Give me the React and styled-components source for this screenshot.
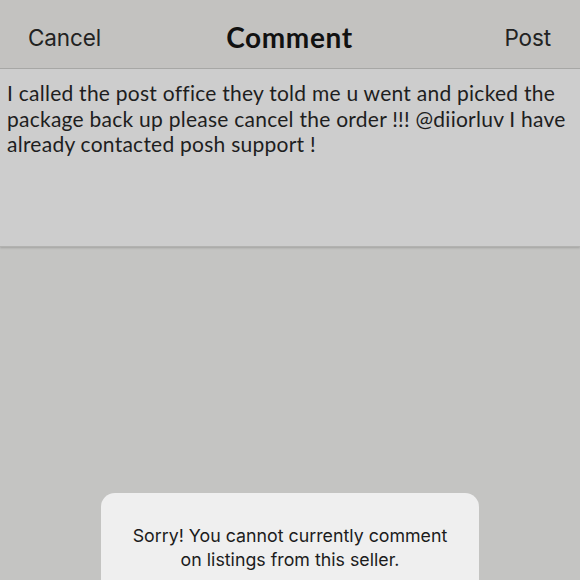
import React from "react"
import styled, { createGlobalStyle } from "styled-components"

const GlobalStyle = createGlobalStyle`
  html, body {
    margin: 0;
    padding: 0;
    background: #c4c4c2;
  }
  * { box-sizing: border-box; }
`

const Screen = styled.div`
  position: relative;
  width: 580px;
  height: 580px;
  overflow: hidden;
  background: #c4c4c2;
  font-family: Lato, "Open Sans", sans-serif;
`

const Header = styled.div`
  height: 69px;
  display: grid;
  grid-template-columns: 1fr auto 1fr;
  align-items: center;
  padding: 6px 29px 0 28px;
  background: #c3c2c0;
  border-bottom: 1px solid #a9a9a7;
`

const NavButton = styled.span`
  font-family: Inter, "Noto Sans", sans-serif;
  font-size: 22.5px;
  color: #222;
  font-weight: 400;
  letter-spacing: -0.1px;
  justify-self: ${p => (p.$right ? "end" : "start")};
`

const Title = styled.h1`
  margin: 0;
  font-family: Lato, sans-serif;
  font-size: 28px;
  font-weight: 700;
  color: #111;
  letter-spacing: 0.6px;
`

const CommentArea = styled.div`
  height: 178px;
  padding: 11px 7px;
  background: #cdcdcd;
  box-shadow: 0 1px 2px rgba(0, 0, 0, 0.18);
  border-bottom: 1px solid #b2b2b0;
  font-size: 21px;
  line-height: 25.5px;
  letter-spacing: 0.25px;
  color: #1e1e1e;
`

const Alert = styled.div`
  position: absolute;
  left: 101px;
  top: 493px;
  width: 378px;
  height: 120px;
  padding-top: 31px;
  background: #efefef;
  border-radius: 14px;
  text-align: center;
  font-family: Inter, "Noto Sans", sans-serif;
  font-size: 17.8px;
  line-height: 24px;
  color: #1c1c1c;
`

export default function App() {
  return (
    <>
      <GlobalStyle />
      <Screen>
        <Header>
          <NavButton>Cancel</NavButton>
          <Title>Comment</Title>
          <NavButton $right>Post</NavButton>
        </Header>
        <CommentArea>
          I called the post office they told me u went and picked the package back up please cancel the order !!! @diiorluv I have already contacted posh support !
        </CommentArea>
        <Alert>
          Sorry! You cannot currently comment
          <br />
          on listings from this seller.
        </Alert>
      </Screen>
    </>
  )
}
